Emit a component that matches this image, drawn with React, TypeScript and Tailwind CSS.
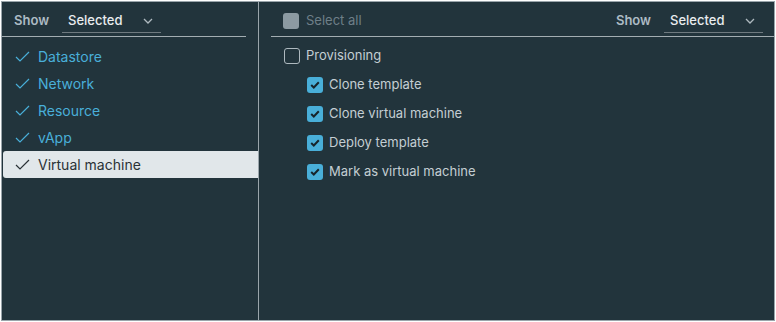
import React from "react";

const Chevron = () => (
  <svg width="10" height="6" viewBox="0 0 10 6" fill="none">
    <path d="M1 1 L5 5 L9 1" stroke="#aeb9bf" strokeWidth="1.3" />
  </svg>
);

const Tick = ({ color }: { color: string }) => (
  <svg width="15" height="11" viewBox="0 0 15 11" fill="none">
    <path d="M1 6 L5 10 L14 1" stroke={color} strokeWidth="1.2" />
  </svg>
);

const ShowSelect = () => (
  <div className="flex items-center gap-[13px]">
    <span className="text-[13px] font-semibold text-[#adbbc4]">Show</span>
    <div className="flex h-[25px] w-[99px] items-center justify-between border-b border-[#6f7a80] pl-[6px] pr-[8px] pt-[2px]">
      <span className="text-[13px] font-medium text-[#e9ecef]">Selected</span>
      <Chevron />
    </div>
  </div>
);

const CheckedBox = () => (
  <div className="flex h-[16px] w-[16px] items-center justify-center rounded-[3px] bg-[#49afd9]">
    <svg width="10" height="8" viewBox="0 0 10 8" fill="none">
      <path d="M1.2 4 L3.8 6.5 L8.8 1.3" stroke="#17242b" strokeWidth="2" />
    </svg>
  </div>
);

const items = ["Datastore", "Network", "Resource", "vApp", "Virtual machine"];
const children = ["Clone template", "Clone virtual machine", "Deploy template", "Mark as virtual machine"];

export default function App() {
  return (
    <div
      className="m-[1px] flex h-[320px] w-[774px] border border-[#9aa5ab] bg-[#22343c]"
      style={{ fontFamily: "Inter, 'Noto Sans', sans-serif" }}
    >
      <div className="flex w-[257px] flex-col border-r border-[#9aa5ab]">
        <div className="mr-[12px] flex h-[35px] items-end border-b border-[#a3adb2] pb-[3px] pl-[12px]">
          <ShowSelect />
        </div>
        <div className="mt-[6px] flex flex-col">
          {items.map((it, i) => {
            const active = i === items.length - 1;
            return (
              <div
                key={it}
                className={
                  "ml-[1px] flex h-[27px] items-center gap-[8px] pl-[12px] " +
                  (active ? "rounded-l-[3px] bg-[#e1e7ea]" : "")
                }
              >
                <Tick color={active ? "#2a3236" : "#49afd9"} />
                <span className={"text-[14px] " + (active ? "text-[#2a3236]" : "text-[#49afd9]")}>{it}</span>
              </div>
            );
          })}
        </div>
      </div>
      <div className="flex flex-1 flex-col">
        <div className="ml-[12px] flex h-[35px] items-end justify-between border-b border-[#a3adb2] pb-[3px] pl-[12px] pr-[11px]">
          <div className="flex h-[25px] items-center gap-[7px]">
            <div className="h-[16px] w-[16px] rounded-[3px] bg-[#8c9aa2]" />
            <span className="text-[13px] text-[#6e7f88]">Select all</span>
          </div>
          <ShowSelect />
        </div>
        <div className="mt-[4px] flex flex-col pl-[25px]">
          <div className="flex h-[29px] items-center gap-[6px]">
            <div className="h-[16px] w-[16px] rounded-[3px] border border-[#aeb9bf]" />
            <span className="text-[13px] text-[#c4ced3]">Provisioning</span>
          </div>
          {children.map((c) => (
            <div key={c} className="flex h-[29px] items-center gap-[6px] pl-[23px]">
              <CheckedBox />
              <span className="text-[13px] text-[#c4ced3]">{c}</span>
            </div>
          ))}
        </div>
      </div>
    </div>
  );
}
